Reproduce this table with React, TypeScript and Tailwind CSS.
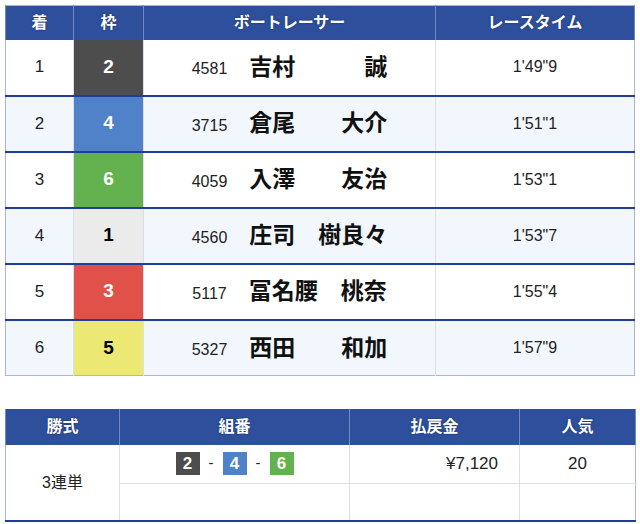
const font = { fontFamily: '"Liberation Sans", "Noto Sans CJK JP", sans-serif' };

type Row = { rank: string; waku: number; id: string; name: string; time: string };

const rows: Row[] = [
  { rank: "1", waku: 2, id: "4581", name: "吉村　　　誠", time: "1'49\"9" },
  { rank: "2", waku: 4, id: "3715", name: "倉尾　　大介", time: "1'51\"1" },
  { rank: "3", waku: 6, id: "4059", name: "入澤　　友治", time: "1'53\"1" },
  { rank: "4", waku: 1, id: "4560", name: "庄司　樹良々", time: "1'53\"7" },
  { rank: "5", waku: 3, id: "5117", name: "冨名腰　桃奈", time: "1'55\"4" },
  { rank: "6", waku: 5, id: "5327", name: "西田　　和加", time: "1'57\"9" },
];

const wakuColor: Record<number, string> = {
  1: "bg-[#ebebeb] text-black",
  2: "bg-[#4d4d4d] text-white",
  3: "bg-[#e05249] text-white",
  4: "bg-[#4f82c9] text-white",
  5: "bg-[#ebe873] text-black",
  6: "bg-[#63b14f] text-white",
};

const head =
  "bg-[#2e4f9b] text-white font-bold text-[16px] border-x border-[#7089c2] [text-shadow:0_0_2px_#1a2f66]";

function Badge({ n }: { n: number }) {
  return (
    <span
      className={`inline-flex w-[24px] h-[23px] items-center justify-center font-bold text-[17px] ${wakuColor[n]}`}
    >
      {n}
    </span>
  );
}

export default function App() {
  return (
    <div className="w-[640px] h-[524px] bg-white px-[5px] pt-[5px]" style={font}>
      <table className="w-[630px] border-collapse border border-[#a9b6d6] table-fixed">
        <colgroup>
          <col className="w-[68px]" />
          <col className="w-[70px]" />
          <col className="w-[292px]" />
          <col />
        </colgroup>
        <thead>
          <tr className="h-[34px]">
            <th className={head}>着</th>
            <th className={head}>枠</th>
            <th className={head}>ボートレーサー</th>
            <th className={head}>レースタイム</th>
          </tr>
        </thead>
        <tbody>
          {rows.map((r, i) => (
            <tr
              key={r.rank}
              className={`h-[56px] border-t-2 border-[#1f3d99] first:border-t-0 ${i % 2 ? "bg-[#f2f7fe]" : "bg-white"}`}
            >
              <td className="text-center text-[17px] text-[#222] border-r border-[#dcdfe6]">{r.rank}</td>
              <td className={`text-center font-bold text-[19px] border-r border-[#dcdfe6] ${wakuColor[r.waku]}`}>
                {r.waku}
              </td>
              <td className="text-center border-r border-[#dcdfe6]">
                <span className="inline-flex items-center">
                  <span className="text-[16px] text-[#222] mr-[22px] mt-[4px]">{r.id}</span>
                  <span className="text-[23px] font-bold text-[#111] whitespace-pre">{r.name}</span>
                </span>
              </td>
              <td className="text-center text-[16px] text-[#222]">{r.time}</td>
            </tr>
          ))}
        </tbody>
      </table>

      <table className="w-[631px] mt-[33px] border-collapse border-x border-b-2 border-[#1f3d99] table-fixed [border-left-color:#a9b6d6] [border-right-color:#a9b6d6]">
        <colgroup>
          <col className="w-[114px]" />
          <col className="w-[230px]" />
          <col className="w-[170px]" />
          <col />
        </colgroup>
        <thead>
          <tr className="h-[36px]">
            <th className={head}>勝式</th>
            <th className={head}>組番</th>
            <th className={head}>払戻金</th>
            <th className={head}>人気</th>
          </tr>
        </thead>
        <tbody>
          <tr className="h-[38px]">
            <td rowSpan={2} className="text-center text-[16px] text-[#222] border-r border-[#dcdfe6]">
              3連単
            </td>
            <td className="text-center border-r border-b border-[#dcdfe6]">
              <span className="inline-flex items-center gap-[9px] text-[#222] text-[15px]">
                <Badge n={2} />
                <span>-</span>
                <Badge n={4} />
                <span>-</span>
                <Badge n={6} />
              </span>
            </td>
            <td className="text-right pr-[21px] text-[17px] text-[#222] border-r border-b border-[#dcdfe6]">¥7,120</td>
            <td className="text-center text-[17px] text-[#222] border-b border-[#dcdfe6]">20</td>
          </tr>
          <tr className="h-[38px]">
            <td className="border-r border-[#dcdfe6]" />
            <td className="border-r border-[#dcdfe6]" />
            <td />
          </tr>
        </tbody>
      </table>
    </div>
  );
}
